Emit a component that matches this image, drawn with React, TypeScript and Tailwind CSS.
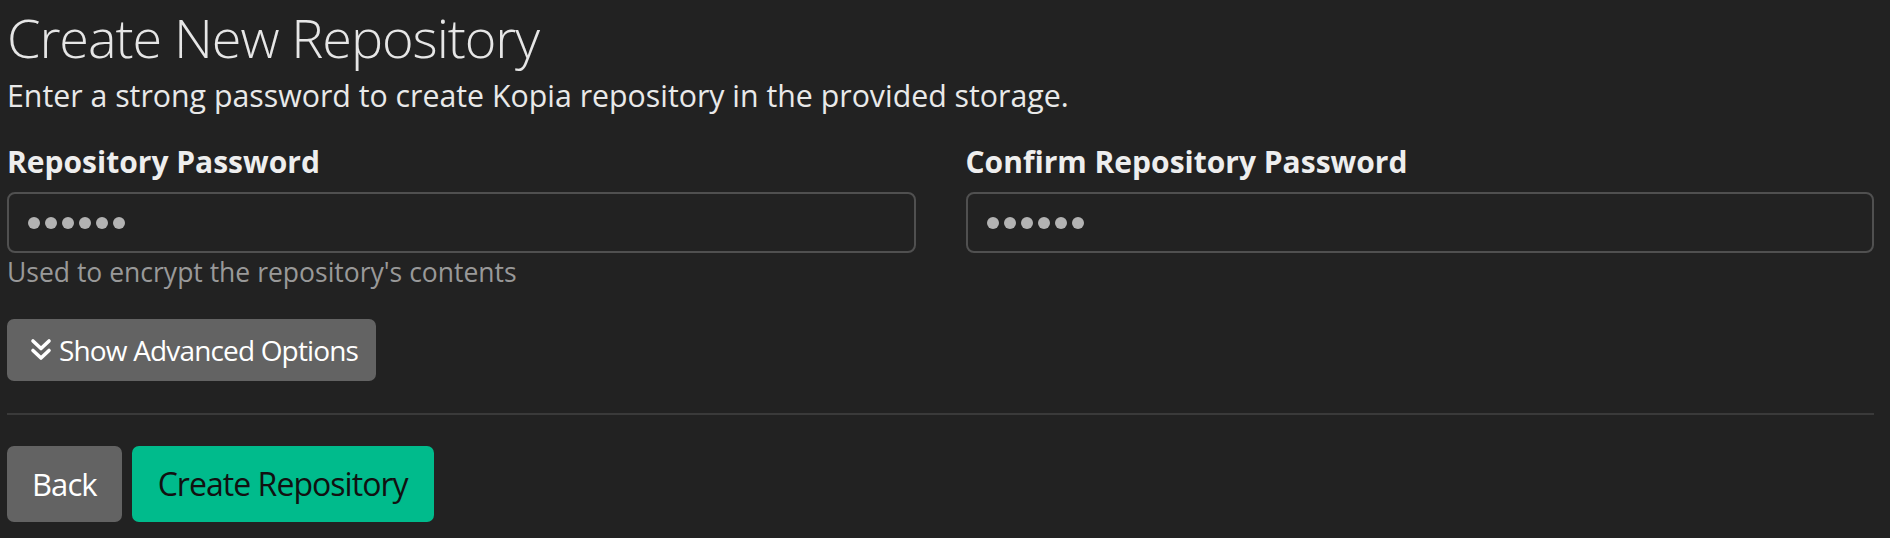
function PasswordBox() {
  return (
    <div className="flex h-[61px] items-center gap-[5px] rounded-[8px] border-2 border-[#505050] bg-[#222222] pl-[19px]">
      {[0, 1, 2, 3, 4, 5].map((i) => (
        <span key={i} className="h-[12px] w-[12px] rounded-full bg-[#b3b3b3]" />
      ))}
    </div>
  );
}

function DoubleDown() {
  return (
    <svg viewBox="0 0 22 24" className="h-[24px] w-[22px]" fill="none" stroke="currentColor" strokeWidth="3.6" strokeLinecap="round" strokeLinejoin="round">
      <path d="M3 3 L11 10.5 L19 3" />
      <path d="M3 12.5 L11 20 L19 12.5" />
    </svg>
  );
}

export default function App() {
  return (
    <div className="min-h-[538px] bg-[#222222] pl-[7px] pr-[16px] font-['Open_Sans','Noto_Sans',sans-serif] text-[#e9e9e9]">
      <h3 className="pt-[5px] text-[54px] font-light leading-[64px] tracking-[-0.02em] text-[#e6e6e6]">
        Create New Repository
      </h3>
      <p className="mt-[7px] text-[30.3px] leading-[40px]">
        Enter a strong password to create Kopia repository in the provided storage.
      </p>

      <div className="mt-[26px] grid grid-cols-2 gap-x-[50px]">
        <div>
          <label className="block text-[30px] font-bold leading-[40px] text-[#eeeeee]">
            Repository Password
          </label>
          <div className="mt-[10px]">
            <PasswordBox />
          </div>
          <div className="mt-[2px] text-[26.5px] leading-[34px] text-[#999999]">
            Used to encrypt the repository's contents
          </div>
        </div>
        <div>
          <label className="block text-[30px] font-bold leading-[40px] text-[#eeeeee]">
            Confirm Repository Password
          </label>
          <div className="mt-[10px]">
            <PasswordBox />
          </div>
        </div>
      </div>

      <button className="mt-[30px] flex h-[62px] items-center gap-[7px] rounded-[7px] bg-[#636363] pl-[23px] pr-[18px] text-[28px] tracking-[-0.03em] text-white">
        <DoubleDown />
        <span>Show Advanced Options</span>
      </button>

      <hr className="mt-[32px] border-0 border-t-2 border-[#3a3a3a]" />

      <div className="mt-[31px] flex gap-[10px]">
        <button className="h-[76px] rounded-[7px] bg-[#636363] px-[25px] text-[31px] tracking-[-0.03em] text-white">
          Back
        </button>
        <button className="h-[76px] rounded-[7px] bg-[#00bb8c] px-[26px] text-[32px] tracking-[-0.03em] text-[#111111]">
          Create Repository
        </button>
      </div>
    </div>
  );
}
